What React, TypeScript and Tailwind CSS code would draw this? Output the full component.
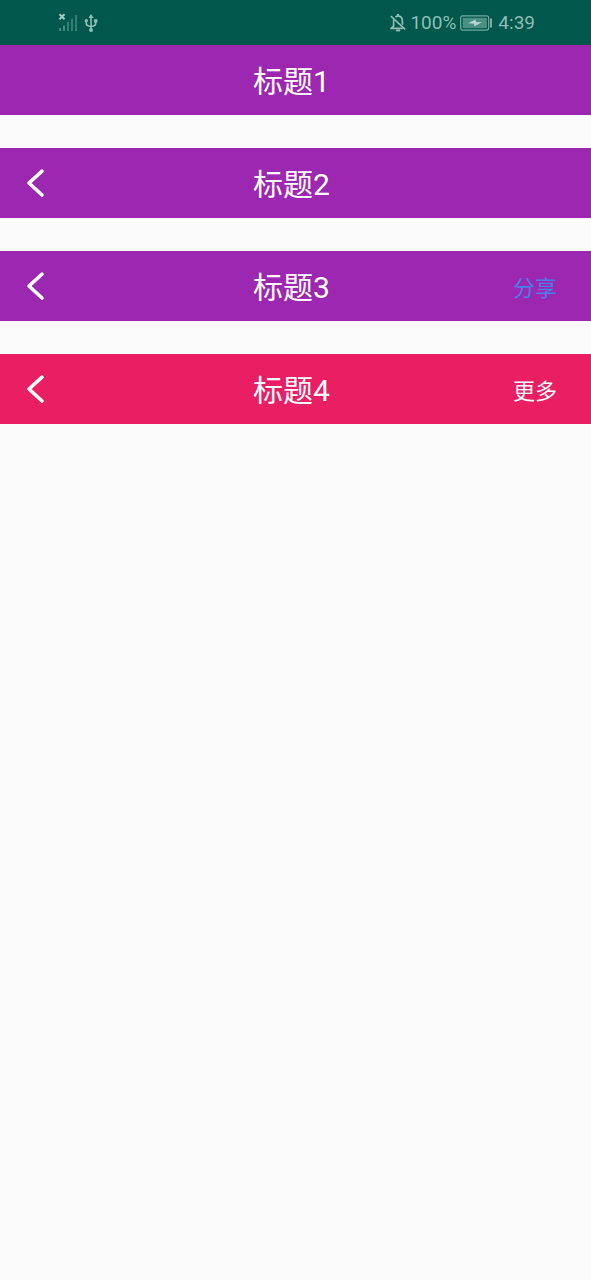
import clsx from 'clsx';

type TitleBarProps = {
  title: string;
  back?: boolean;
  action?: string;
  barClass?: string;
  actionClass?: string;
};

const bars: TitleBarProps[] = [
  { title: '标题1' },
  { title: '标题2', back: true },
  { title: '标题3', back: true, action: '分享', actionClass: 'text-[#4a7ee6]' },
  { title: '标题4', back: true, action: '更多', barClass: 'bg-[#e91e63]' },
];

const SignalIcon = () => (
  <svg className="w-5 h-5" viewBox="0 0 20 20" fill="none">
    <path d="M1.5 1.2l5 5M6.5 1.2l-5 5" stroke="#a5cbc4" strokeWidth="2" />
    <path d="M2.2 15v3M6 12.5V18" stroke="#4b8f84" strokeWidth="1.8" />
    <path d="M10 9v9M14 5.5V18M18 2v16" stroke="#39847a" strokeWidth="1.8" />
  </svg>
);

const UsbIcon = () => (
  <svg className="w-4 h-5" viewBox="0 0 16 20" fill="none" stroke="currentColor" strokeWidth="1.6">
    <path d="M8 3v13" />
    <path d="M3.3 8v2.5c0 1.5 1 2.2 2.4 2.5L8 13.6l2.3-.6c1.4-.3 2.4-1 2.4-2.5V8" />
    <path d="M8 1l2.6 4H5.4z" fill="currentColor" stroke="none" />
    <circle cx="8" cy="17" r="2" fill="currentColor" stroke="none" />
    <circle cx="3.3" cy="7.8" r="1.7" fill="currentColor" stroke="none" />
    <path d="M11 6.2h3.4v3.3H11z" fill="currentColor" stroke="none" />
  </svg>
);

const BellOffIcon = () => (
  <svg className="w-4 h-5" viewBox="0 0 16 20" fill="none" stroke="currentColor" strokeWidth="1.7">
    <path d="M5.4 4.2C6.2 3.5 7 3.2 8 3.2c2.9 0 4.4 2 4.4 4.8v3.8M3.6 6.6v6.6L1.4 15.4h11.4" />
    <path d="M8 1v2" strokeWidth="2.2" />
    <path d="M6 17.4h4" strokeWidth="2" />
    <path d="M.8 3.2l14.4 13.2" />
  </svg>
);

const BatteryIcon = () => (
  <svg className="w-8 h-4" viewBox="0 0 32 16" fill="none">
    <rect x=".7" y=".9" width="28" height="14.2" rx="2" stroke="#72a9a0" strokeWidth="1.2" />
    <rect x="2.6" y="2.8" width="24.2" height="10.4" fill="#4b8f84" />
    <path d="M8 8.2l7.4-3.6.6 2.3 6 .4-7.6 4-.5-2.5z" fill="#b5d5d0" />
    <path d="M31 3.5v9" stroke="#85b7ae" strokeWidth="1.8" />
  </svg>
);

const StatusBar = () => (
  <header className="flex items-center justify-between h-[45px] pl-[58px] pr-14 bg-[#00574b] text-[#8fbdb5]">
    <div className="flex items-center gap-[5px]">
      <SignalIcon />
      <UsbIcon />
    </div>
    <div className="flex items-center gap-1 text-[19px] leading-6">
      <BellOffIcon />
      <span>100%</span>
      <BatteryIcon />
      <span className="pl-0.5">4:39</span>
    </div>
  </header>
);

const TitleBar = ({ title, back, action, barClass = 'bg-[#9c27b0]', actionClass = 'text-white' }: TitleBarProps) => (
  <section className={clsx('grid grid-cols-[70px_1fr_78px] items-center h-[70px] text-white', barClass)}>
    <div className="flex">
      {back && (
        <button type="button" aria-label="返回" className="py-4 pl-[26px] pr-4">
          <svg className="w-5 h-8" viewBox="0 0 20 32" fill="none" stroke="currentColor" strokeWidth="3.6" strokeLinecap="round" strokeLinejoin="round">
            <path d="M16 4.2L3 16l13 12" />
          </svg>
        </button>
      )}
    </div>
    <h1 className="pt-1 text-center text-[30px] leading-9">{title}</h1>
    {action && (
      <button type="button" className={clsx('pt-1.5 text-left text-[22px] leading-8', actionClass)}>
        {action}
      </button>
    )}
  </section>
);

const App = () => (
  <div className="min-h-screen bg-[#fafafa] font-[Roboto,'Noto_Sans_CJK_SC',sans-serif]">
    <StatusBar />
    <main className="flex flex-col gap-[33px]">
      {bars.map(bar => (
        <TitleBar key={bar.title} {...bar} />
      ))}
    </main>
  </div>
);

export default App;
